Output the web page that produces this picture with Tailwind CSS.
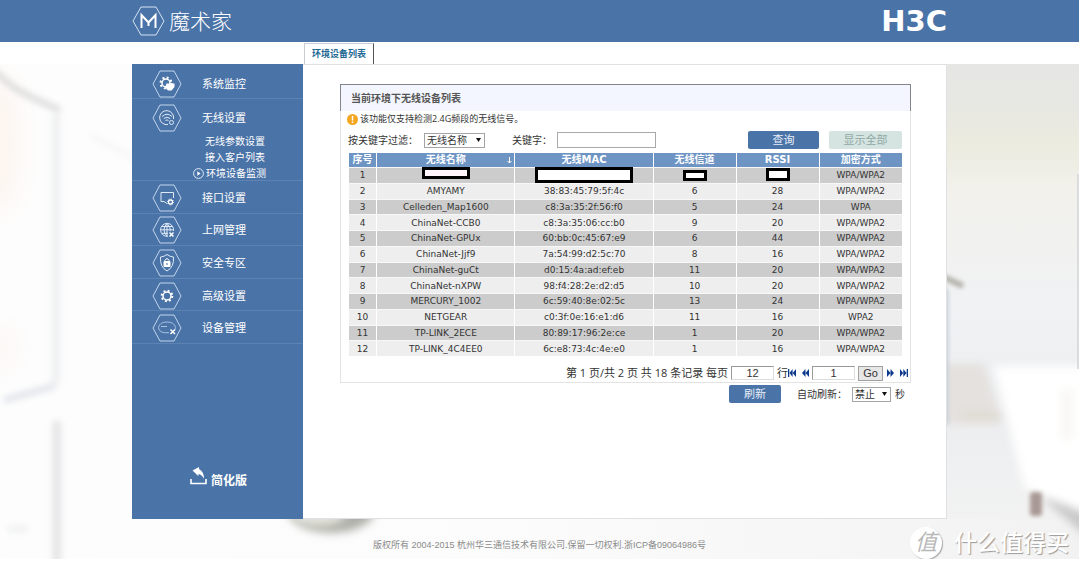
<!DOCTYPE html>
<html lang="zh-CN">
<head>
<meta charset="utf-8">
<meta name="viewport" content="width=device-width, initial-scale=1">
<title>环境设备列表</title>
<script src="https://cdn.jsdelivr.net/npm/@tailwindcss/browser@4"></script>
</head>
<body class="mr-px bg-white font-['Open_Sans','Noto_Sans_CJK_SC',sans-serif] text-[10px] leading-4 text-[#333]">

<svg class="hidden">
  <symbol id="hex" viewBox="0 0 30 28"><path d="M1 14 8 1h14l7 13-7 13H8Z" fill="none" stroke="#c3d6ec" stroke-width="1"/></symbol>
</svg>

<header class="h-[42px] bg-[#4a73a8]">
  <div class="mx-auto flex h-full max-w-[815px] items-center justify-between text-white">
    <div class="flex items-center gap-1">
      <svg class="h-[30px] w-[33px]" viewBox="0 0 33 30" fill="none" stroke="#d5e3f3">
        <path d="M1 15 9 1h15l8 14-8 14H9Z"/>
        <path d="M9.500 22V9l7 7.500L23.500 9v13M16.500 16.500V20" stroke="#fff" stroke-width="2"/>
      </svg>
      <span class="text-[21px] leading-8 font-light">魔术家</span>
    </div>
    <span class="font-['DejaVu_Sans',sans-serif] text-[29px] leading-8 font-bold">H3C</span>
  </div>
</header>

<div class="mx-auto h-[22px] max-w-[815px] pt-px pl-[172px]">
  <a href="#" class="inline-flex h-full w-[70px] items-center justify-center border border-b-0 border-[#c8cdd3] border-r-[#555] text-[9px] font-bold text-[#1c6892]">环境设备列表</a>
</div>

<div class="relative">
  <svg class="absolute inset-0 h-full w-full" viewBox="0 0 1080 495" preserveAspectRatio="none" aria-hidden="true">
    <defs>
      <filter id="b2" x="-50%" y="-50%" width="200%" height="200%"><feGaussianBlur stdDeviation="2"/></filter>
      <filter id="b3" filterUnits="userSpaceOnUse" x="-20" y="-20" width="220" height="540"><feGaussianBlur stdDeviation="3"/></filter>
      <filter id="b4" x="-50%" y="-50%" width="200%" height="200%"><feGaussianBlur stdDeviation="4"/></filter>
      <filter id="b12" x="-50%" y="-50%" width="200%" height="200%"><feGaussianBlur stdDeviation="12"/></filter>
      <linearGradient id="wall" x1="0" y1="0" x2="0" y2="1">
        <stop offset="0" stop-color="#e6e7e4"/><stop offset=".08" stop-color="#e7e7e3"/>
        <stop offset=".16" stop-color="#ecebdf"/><stop offset=".26" stop-color="#f2f1ec"/>
        <stop offset=".5" stop-color="#f0f2f4"/><stop offset=".7" stop-color="#ecedef"/>
        <stop offset="1" stop-color="#f4f4f4"/>
      </linearGradient>
      <linearGradient id="floor" x1="0" y1="0" x2="1" y2="0">
        <stop offset="0" stop-color="#fdfdfd"/><stop offset=".45" stop-color="#fcfcfc"/><stop offset="1" stop-color="#f2f2f2"/>
      </linearGradient>
    </defs>
    <rect width="1080" height="495" fill="#fdfdfd"/>
    <rect x="940" width="140" height="495" fill="url(#wall)"/>
    <rect y="455" width="1080" height="40" fill="url(#floor)"/>
    <ellipse cx="0" cy="80" rx="20" ry="70" fill="#fdf5f0" filter="url(#b12)"/>
    <ellipse cx="0" cy="285" rx="18" ry="24" fill="#fdf8f5" filter="url(#b12)"/>
    <g filter="url(#b3)" fill="none">
      <path d="M-6 6C12 26 32 34 60 46" stroke="#dadbda" stroke-width="6"/>
      <path d="M56 50V320" stroke="#eeeff0" stroke-width="8"/>
      <path d="M57 357V500" stroke="#e6e6e8" stroke-width="9"/>
      <path d="M4 336 55 322" stroke="#e0e3ea" stroke-width="6"/>
      <path d="M90 71 135 95" stroke="#f7f7f7" stroke-width="6"/>
      <path d="M8 465H28" stroke="#f2f3f4" stroke-width="8"/>
    </g>
    <ellipse cx="332" cy="445" rx="44" ry="24" fill="#b0b0aa" filter="url(#b4)"/>
    <ellipse cx="318" cy="450" rx="28" ry="12" fill="#e4e4dd" filter="url(#b4)"/>
    <g filter="url(#b4)">
      <path d="M945 300H985L1002 360H945Z" fill="#e4e1de"/>
      <path d="M963 352H1003" stroke="#d9d6c9" stroke-width="4"/>
      <path d="M1042 432 1090 448V475L1050 440Z" fill="#c9c9c9"/>
      <path d="M995 302H1090V450L1026 424Q1014 380 995 302Z" fill="#fff"/>
      <path d="M1062 325H1074V375H1062Z" fill="#f8f7f4"/>
    </g>
    <path d="M944 213 964 222" stroke="#b4b2ab" stroke-width="6" filter="url(#b2)"/>
    <rect x="941" y="225" width="8" height="135" fill="#c3cad6" filter="url(#b2)"/>
    <rect x="1031" y="428" width="12" height="24" rx="3" fill="#a89994" filter="url(#b2)"/>
    <rect x="1078" y="110" width="2" height="195" fill="#dadcde"/>
  </svg>

  <div class="relative mx-auto flex min-h-[455px] max-w-[815px]">
    <nav class="flex w-[171px] shrink-0 flex-col bg-[#4a73a8] text-[11px] text-white" aria-label="主菜单">
      <a href="#" class="flex h-[35px] items-end gap-5 border-b border-[#5d83b4] pl-5">
        <svg class="h-7 w-[30px]" viewBox="0 0 30 28"><use href="#hex"/>
          <circle cx="14" cy="13" r="4" fill="none" stroke="#fff" stroke-width="1.500"/><circle cx="14" cy="13" r="5.500" fill="none" stroke="#fff" stroke-width="2" stroke-dasharray="2 2.320"/>
          <path d="M14.500 13.500h8v3.500l-3 3.500h-3.500l-3-3Z" fill="#fff"/></svg>
        <span class="leading-7">系统监控</span>
      </a>
      <div class="h-[82px] border-b border-[#5d83b4]">
        <a href="#" class="flex h-[33px] items-center gap-5 pt-1 pl-5">
          <svg class="h-7 w-[30px]" viewBox="0 0 30 28" fill="none" stroke="#dfeaf6"><use href="#hex"/>
            <path d="M16 20.500A7 7 0 1 1 21.500 15M10 12.500q5-4.500 10 0M11.800 14.500q3.200-2.700 6.400 0M13.500 16.500q1.500-1.200 3 0"/><circle cx="19.500" cy="18.500" r="2"/></svg>
          <span>无线设置</span>
        </a>
        <ul class="pt-px pl-[61px] text-[10px]">
          <li class="flex h-4 items-center pl-3"><a href="#">无线参数设置</a></li>
          <li class="flex h-4 items-center pl-3"><a href="#">接入客户列表</a></li>
          <li class="flex h-4 items-center gap-0.5"><svg class="h-[11px] w-[11px]" viewBox="0 0 11 11"><circle cx="5.500" cy="5.500" r="4.900" fill="none" stroke="#dfeaf6"/><path d="M4.300 3.300v4.400l3.200-2.200Z" fill="#fff"/></svg><a href="#" aria-current="page">环境设备监测</a></li>
        </ul>
      </div>
      <div class="grid h-[163px] grid-rows-5">
        <a href="#" class="flex items-center gap-5 border-b border-[#5d83b4] pt-0.5 pl-5">
          <svg class="h-7 w-[30px]" viewBox="0 0 30 28" fill="none" stroke="#dfeaf6"><use href="#hex"/><path d="M15 19.500 12 17.500H9V8.500H21.500V14"/><circle cx="18.500" cy="18" r="2" stroke="#fff" stroke-width="1.300"/><circle cx="18.500" cy="18" r="3" stroke="#fff" stroke-dasharray="1 1.350"/></svg>
          <span>接口设置</span></a>
        <a href="#" class="flex items-center gap-5 border-b border-[#5d83b4] pt-0.5 pl-5">
          <svg class="h-7 w-[30px]" viewBox="0 0 30 28" fill="none" stroke="#dfeaf6"><use href="#hex"/><path d="M16 20.300A6.500 6.500 0 1 1 21.500 15M8.500 13.800H21.500M10 10.500h10M10 17.300h6M15 7.300v12.500"/><path d="M15 7.300q-6 6.500 0 13M15 7.300q4 4 3.300 8"/><path d="m17.500 16.500 4 4m0-4-4 4" stroke="#fff" stroke-width="1.500"/></svg>
          <span>上网管理</span></a>
        <a href="#" class="flex items-center gap-5 border-b border-[#5d83b4] pt-0.5 pl-5">
          <svg class="h-7 w-[30px]" viewBox="0 0 30 28" fill="none" stroke="#dfeaf6"><use href="#hex"/><path d="M15 5.500Q18 7.800 21.500 8q.8 10-6.500 14Q7.700 18 8.500 8 12 7.800 15 5.500Z"/><path d="M12 12.500h6v5h-6Z" fill="#fff" stroke="#fff"/><path d="M13 12.500v-1.200q2-3.300 4 0v1.200" stroke="#fff"/><path d="M15 14v2" stroke="#4a73a8"/></svg>
          <span>安全专区</span></a>
        <a href="#" class="flex items-center gap-5 border-b border-[#5d83b4] pt-0.5 pl-5">
          <svg class="h-7 w-[30px]" viewBox="0 0 30 28" fill="none" stroke="#fff"><use href="#hex"/><circle cx="15" cy="14" r="4" stroke-width="1.500"/><circle cx="15" cy="14" r="5.300" stroke-width="2" stroke-dasharray="1.900 2.262"/></svg>
          <span>高级设置</span></a>
        <a href="#" class="flex items-center gap-5 border-b border-[#5d83b4] pt-0.5 pl-5">
          <svg class="h-7 w-[30px]" viewBox="0 0 30 28" fill="none" stroke="#a9c2e0"><use href="#hex"/><path d="M17 18.700Q6.500 19.500 6.500 13.500q1-5.500 8.500-5.500t8.500 5.500q0 1.500-1 2.500M9 12.500h6"/><path d="m18.500 15.500 4.500 4.500m0-4.500-4.500 4.500" stroke="#fff" stroke-width="1.500"/></svg>
          <span>设备管理</span></a>
      </div>
      <a href="#" class="mt-auto mb-[30px] flex items-end gap-1 pl-[58px] text-[12px] font-bold">
        <svg class="mb-1 h-[18px] w-[17px]" viewBox="0 0 17 18"><path d="M1 12v4.500h15V12" fill="none" stroke="#fff" stroke-width="1.600"/><path d="M2.500 3.500 9 0l.2 2.200q4.800 2.500 4.800 9.500Q11.500 7.500 8.700 7l-.4 2Z" fill="#fff"/></svg>
        <span>简化版</span>
      </a>
    </nav>

    <main class="min-w-0 grow border border-l-0 border-[#dfe1e4] bg-white pt-[19px] pr-[35px] pl-[37px]">
      <section>
        <h1 class="h-[27px] border border-b-0 border-[#82858c] bg-[#f3f6fe] pl-[10px] text-[10px] leading-[27px] font-bold text-[#555]">当前环境下无线设备列表</h1>
        <div class="border border-t-0 border-[#e3e3e3] pr-2 pl-2">
          <p class="flex h-4 items-center gap-0.5 text-[9px]">
            <svg class="-ml-0.5 h-[11px] w-[11px]" viewBox="0 0 11 11"><circle cx="5.500" cy="5.500" r="5.500" fill="#f3a61f"/><path d="M5.500 2v4.500M5.500 7.500v1.500" stroke="#fff" stroke-width="1.500"/></svg>
            该功能仅支持检测2.4G频段的无线信号。
          </p>
          <form class="flex h-[26px] items-center">
            <label for="field" class="-ml-px w-[76px]">按关键字过滤：</label>
            <div class="relative">
              <select id="field" class="block h-[15px] w-[61px] appearance-none border border-[#a5a5a5] bg-white pl-0.5 leading-[13px]"><option>无线名称</option></select>
              <svg class="pointer-events-none absolute top-[5px] right-1 h-1 w-[5px]" viewBox="0 0 5 4"><path d="M0 0h5L2.500 4Z" fill="#111"/></svg>
            </div>
            <label for="kw" class="ml-[27px] w-[45px]">关键字：</label>
            <input id="kw" type="text" class="h-4 w-[99px] border border-[#a9a9a9] bg-white px-1">
            <div class="ml-auto flex gap-[10px] text-[11px]">
              <button type="button" class="h-[18px] w-[71px] rounded-xs bg-[#4a73a8] text-[#e8eff8]">查询</button>
              <button type="button" class="h-[18px] w-[73px] rounded-xs bg-[#d5e4e1] text-[#8fa8a4]">显示全部</button>
            </div>
          </form>
          <table class="h-[203px] w-full table-fixed border-collapse text-center font-['DejaVu_Sans','Noto_Sans_CJK_SC',sans-serif] text-[9px] leading-[14px] [&_td]:border-x [&_td]:border-white [&_td]:p-0 [&_th]:border-x [&_th]:border-white [&_th]:p-0 [&_tr>*:first-child]:border-l-0 [&_tr>*:last-child]:border-r-0">
            <colgroup><col class="w-[5%]"><col class="w-[25%]"><col class="w-[25%]"><col class="w-[15%]"><col class="w-[15%]"><col class="w-[15%]"></colgroup>
            <thead class="text-[10px]">
              <tr class="bg-[#6e94c4] text-white"><th>序号</th><th class="relative">无线名称<svg class="absolute top-1 right-0.5 h-[7px] w-[5px]" viewBox="0 0 5 7"><path d="M2.500 0v6M.5 4l2 2 2-2" fill="none" stroke="#fff"/></svg></th><th>无线MAC</th><th>无线信道</th><th>RSSI</th><th>加密方式</th></tr>
            </thead>
            <tbody class="[&_tr]:border-t [&_tr]:border-[#f8f8f8] [&_tr:nth-child(even)]:bg-[#eee] [&_tr:nth-child(odd)]:bg-[#ccc]">
              <tr><td>1</td>
                <td><div class="relative h-[14px]"><span class="absolute -top-px left-1/2 h-3 w-12 -translate-x-1/2 border-3 border-black bg-[#fff5fa]"></span></div></td>
                <td><div class="relative h-[14px]"><span class="absolute -top-px left-1/2 h-4 w-[98px] -translate-x-1/2 border-3 border-black bg-white"></span></div></td>
                <td><div class="relative h-[14px]"><span class="absolute top-0.5 left-1/2 h-[11px] w-6 -translate-x-1/2 border-3 border-black bg-white"></span></div></td>
                <td><div class="relative h-[14px]"><span class="absolute top-0 left-1/2 h-[13px] w-6 -translate-x-1/2 border-3 border-black bg-white"></span></div></td>
                <td>WPA/WPA2</td></tr>
              <tr><td>2</td><td>AMYAMY</td><td>38:83:45:79:5f:4c</td><td>6</td><td>28</td><td>WPA/WPA2</td></tr>
              <tr><td>3</td><td>Celleden_Map1600</td><td>c8:3a:35:2f:56:f0</td><td>5</td><td>24</td><td>WPA</td></tr>
              <tr><td>4</td><td>ChinaNet-CCB0</td><td>c8:3a:35:06:cc:b0</td><td>9</td><td>20</td><td>WPA/WPA2</td></tr>
              <tr><td>5</td><td>ChinaNet-GPUx</td><td>60:bb:0c:45:67:e9</td><td>6</td><td>44</td><td>WPA/WPA2</td></tr>
              <tr><td>6</td><td>ChinaNet-Jjf9</td><td>7a:54:99:d2:5c:70</td><td>8</td><td>16</td><td>WPA/WPA2</td></tr>
              <tr><td>7</td><td>ChinaNet-guCt</td><td>d0:15:4a:ad:ef:eb</td><td>11</td><td>20</td><td>WPA/WPA2</td></tr>
              <tr><td>8</td><td>ChinaNet-nXPW</td><td>98:f4:28:2e:d2:d5</td><td>10</td><td>20</td><td>WPA/WPA2</td></tr>
              <tr><td>9</td><td>MERCURY_1002</td><td>6c:59:40:8e:02:5c</td><td>13</td><td>24</td><td>WPA/WPA2</td></tr>
              <tr><td>10</td><td>NETGEAR</td><td>c0:3f:0e:16:e1:d6</td><td>11</td><td>16</td><td>WPA2</td></tr>
              <tr><td>11</td><td>TP-LINK_2ECE</td><td>80:89:17:96:2e:ce</td><td>1</td><td>20</td><td>WPA/WPA2</td></tr>
              <tr><td>12</td><td>TP-LINK_4C4EE0</td><td>6c:e8:73:4c:4e:e0</td><td>1</td><td>16</td><td>WPA/WPA2</td></tr>
            </tbody>
          </table>
          <div class="-mr-2 flex h-[26px] items-center justify-end pt-2 pr-0.5 text-[11px]">
            <label for="per">第 1 页/共 2 页 共 18 条记录 每页</label>
            <input id="per" type="text" value="12" class="mx-[3px] h-[14px] w-[43px] border border-[#ddd] border-t-[#999] border-l-[#999] bg-white text-center font-['Liberation_Sans',sans-serif]">
            <span>行</span>
            <button type="button" aria-label="首页" class="h-3 w-2"><svg class="h-2 w-2" viewBox="0 0 8 8"><path d="M0 0h1.300v8H0ZM4.600 0v8L1.500 4ZM8 0v8L4.700 4Z" fill="#0b3a8c"/></svg></button>
            <button type="button" aria-label="上一页" class="ml-[6px] h-3 w-[7px]"><svg class="h-2 w-[7px]" viewBox="0 0 7 8"><path d="M3.500 0v8L0 4ZM7 0v8L3.500 4Z" fill="#0b3a8c"/></svg></button>
            <input type="text" value="1" aria-label="页码" class="mx-[3px] h-[14px] w-[43px] border border-[#ddd] border-t-[#999] border-l-[#999] bg-white text-center font-['Liberation_Sans',sans-serif]">
            <button type="button" class="h-[15px] w-[25px] border border-[#a0a0a0] bg-[#e6e6e6] font-['Liberation_Sans',sans-serif] leading-[13px]">Go</button>
            <button type="button" aria-label="下一页" class="ml-1 h-3 w-[7px]"><svg class="h-2 w-[7px]" viewBox="0 0 7 8"><path d="M0 0v8L3.500 4ZM3.500 0v8L7 4Z" fill="#0b3a8c"/></svg></button>
            <button type="button" aria-label="末页" class="ml-[6px] h-3 w-2"><svg class="h-2 w-2" viewBox="0 0 8 8"><path d="M6.700 0H8v8H6.700ZM0 0v8L3.200 4ZM3.300 0v8L6.500 4Z" fill="#0b3a8c"/></svg></button>
          </div>
        </div>
      </section>
      <div class="flex items-center justify-end pt-0.5 pr-[6px]">
        <button type="button" class="mr-4 h-[18px] w-[52px] rounded-xs bg-[#4a73a8] text-[11px] text-[#e8eff8]">刷新</button>
        <label for="auto" class="w-[55px]">自动刷新：</label>
        <div class="relative">
          <select id="auto" class="block h-[15px] w-[39px] appearance-none border border-[#a5a5a5] bg-white pl-0.5 leading-[13px]"><option>禁止</option></select>
          <svg class="pointer-events-none absolute top-[5px] right-1 h-1 w-[5px]" viewBox="0 0 5 4"><path d="M0 0h5L2.500 4Z" fill="#111"/></svg>
        </div>
        <span class="ml-1">秒</span>
      </div>
    </main>
  </div>

  <footer class="relative h-10 pt-[18px] text-center font-['Liberation_Sans','Noto_Sans_CJK_SC',sans-serif] text-[9px] text-[#8a8a8a]">
    版权所有 2004-2015 杭州华三通信技术有限公司.保留一切权利.浙ICP备09064986号
    <div class="absolute right-[10px] bottom-0 flex items-center gap-3 text-white">
      <span class="flex h-8 w-8 items-center justify-center rounded-full bg-white text-[22px] leading-8 text-[#b8b8b8] italic shadow-[1px_1px_1px_#aaa]">值</span>
      <span class="text-[23px] leading-8 font-medium [text-shadow:1px_1px_1px_#999]">什么值得买</span>
    </div>
  </footer>
</div>
</body>
</html>
